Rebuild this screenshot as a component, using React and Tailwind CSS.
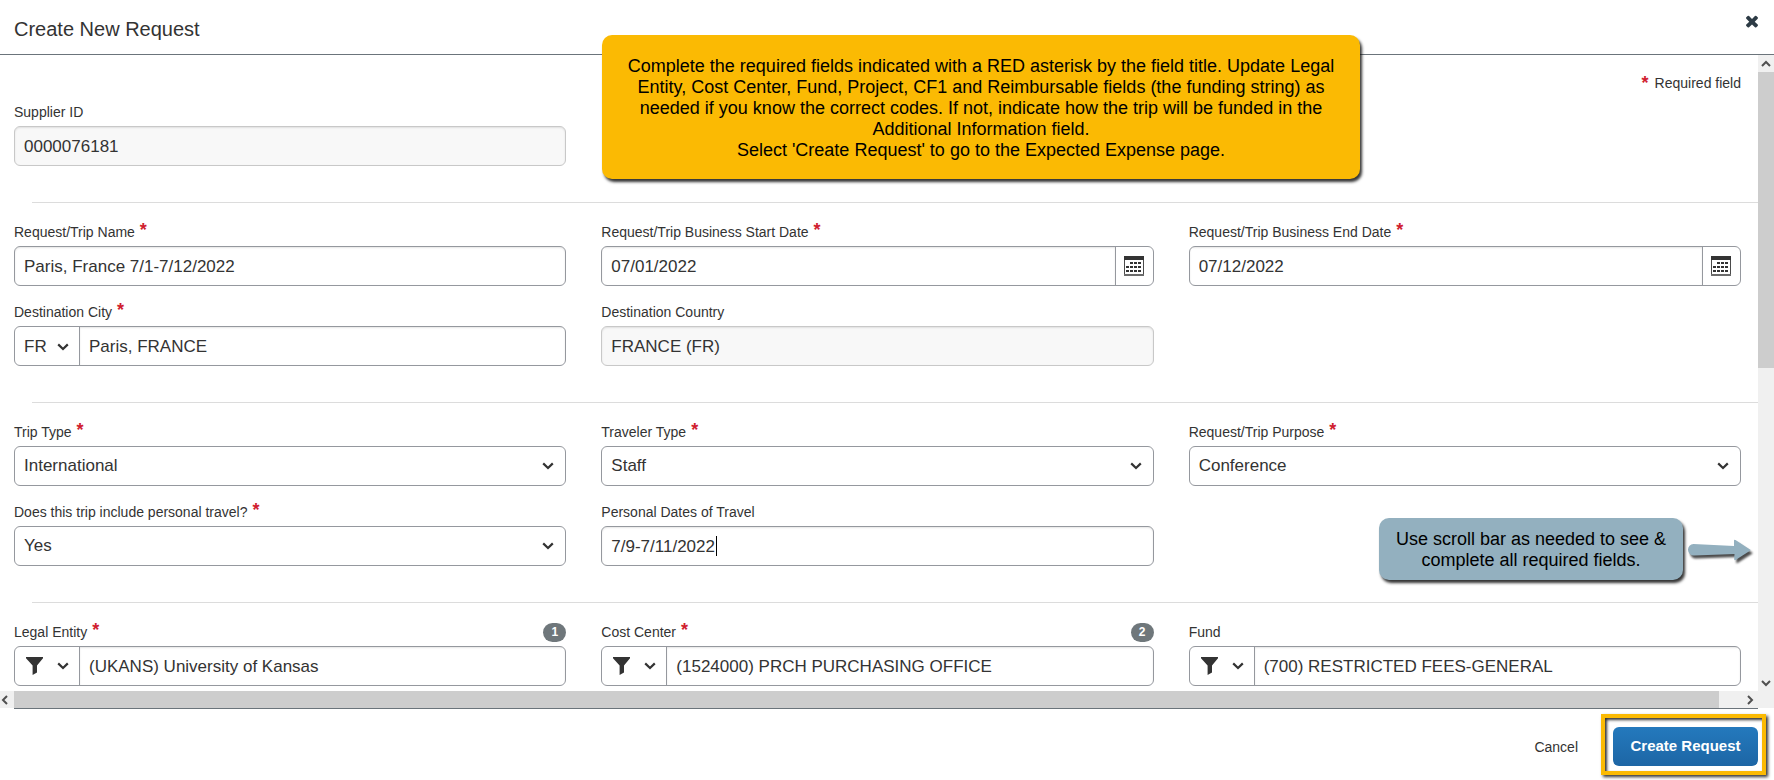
import { useState } from "react";
import clsx from "clsx";

const CONTROL = "h-10 w-full rounded-md border px-[9px] text-[17px] text-[#333]";
const GROUP = "flex h-10 w-full overflow-hidden rounded-md border border-[#95989e] bg-white text-[17px] text-[#333]";
const INSET = "pt-[2px] shadow-[inset_0_1px_2px_rgba(0,0,0,0.1)]";

function Chevron({ className }) {
    return (
        <svg viewBox="0 0 12 8" className={clsx("h-2 w-3 shrink-0", className)} fill="none" stroke="currentColor">
            <path d="M1.2 1.4 6 6 10.8 1.4" strokeWidth="2.2" />
        </svg>
    );
}

function CalendarIcon() {
    const dots = [
        [7, 7], [11, 7], [15, 7],
        [3, 11], [7, 11], [11, 11], [15, 11],
        [3, 15], [7, 15], [11, 15], [15, 15],
    ];
    return (
        <svg viewBox="0 0 20 20" className="size-5" shapeRendering="crispEdges">
            <rect width="20" height="20" fill="#4b4b4b" />
            <rect x="1" y="4" width="18" height="14" fill="#fff" />
            <rect width="20" height="4" fill="#333" />
            <rect y="18" width="20" height="2" fill="#6b6b6b" />
            {dots.map(([x, y]) => (
                <rect key={`${x}-${y}`} x={x - 1} y={y - 1} width="3" height="2" fill="#333" />
            ))}
        </svg>
    );
}

function FilterIcon() {
    return (
        <svg viewBox="0 0 17 18" className="h-[18px] w-[17px]" fill="#333">
            <path d="M0 0h17v1.2L11 8.4v7.2L6.6 18V8.4L0 1.2z" />
        </svg>
    );
}

function Field({ id, label, required, badge, children }) {
    return (
        <div>
            <div className="mb-1 flex h-5 items-center justify-between">
                <label htmlFor={id} className="flex gap-[5px] text-sm">
                    {label}
                    {required && <span className="text-lg leading-4 font-bold text-[#d0202e]">*</span>}
                </label>
                {badge && (
                    <span className="flex h-[19px] w-[23px] items-center justify-center rounded-full bg-[#6f777b] text-xs font-bold text-white">
                        {badge}
                    </span>
                )}
            </div>
            {children}
        </div>
    );
}

function TextField({ value, disabled, editing, ...field }) {
    const [text, setText] = useState(value);
    return (
        <Field {...field}>
            <div className="relative">
                <input
                    id={field.id}
                    value={text}
                    disabled={disabled}
                    onChange={(e) => setText(e.target.value)}
                    className={clsx(CONTROL, INSET, disabled ? "border-[#c8c8c8] bg-[#f8f8f8]" : "border-[#95989e] bg-white")}
                />
                {editing && <span className="pointer-events-none absolute top-[10px] left-[115px] h-5 w-px bg-black" />}
            </div>
        </Field>
    );
}

function DateField({ value, ...field }) {
    const [text, setText] = useState(value);
    return (
        <Field {...field}>
            <div className={GROUP}>
                <input
                    id={field.id}
                    value={text}
                    onChange={(e) => setText(e.target.value)}
                    className={clsx("min-w-0 flex-1 px-[9px]", INSET)}
                />
                <button aria-label="Open calendar" className="flex w-[38px] items-center justify-center border-l border-[#95989e]">
                    <CalendarIcon />
                </button>
            </div>
        </Field>
    );
}

function SelectField({ options, ...field }) {
    return (
        <Field {...field}>
            <div className="relative">
                <select id={field.id} className={clsx(CONTROL, "appearance-none border-[#95989e] bg-white")}>
                    {options.map((o) => (
                        <option key={o}>{o}</option>
                    ))}
                </select>
                <Chevron className="pointer-events-none absolute top-4 right-3" />
            </div>
        </Field>
    );
}

function LookupField({ value, prefix, ...field }) {
    const [text, setText] = useState(value);
    return (
        <Field {...field}>
            <div className={GROUP}>
                <button
                    aria-label={`${field.label} options`}
                    className={clsx(
                        "flex w-[65px] shrink-0 items-center justify-between border-r border-[#95989e] pr-[10px]",
                        prefix ? "pt-[2px] pl-[9px]" : "pl-[11px]"
                    )}
                >
                    {prefix || <FilterIcon />}
                    <Chevron />
                </button>
                <input
                    id={field.id}
                    value={text}
                    onChange={(e) => setText(e.target.value)}
                    className={clsx("min-w-0 flex-1 px-[9px]", INSET)}
                />
            </div>
        </Field>
    );
}

function Row({ children }) {
    return <div className="grid grid-cols-3 gap-x-[35px] gap-y-4 pr-[17px] pl-[14px]">{children}</div>;
}

function Divider() {
    return <hr className="mt-9 mb-[19px] ml-8 border-[#dcdcdc]" />;
}

function ScrollArrow({ d }) {
    return (
        <svg viewBox="0 0 10 10" className="size-[10px]" fill="none" stroke="#505050" strokeWidth="2">
            <path d={d} />
        </svg>
    );
}

export default function App() {
    return (
        <div className="relative flex min-h-screen flex-col bg-white font-['Liberation_Sans',Arial,sans-serif] text-[#333]">
            <header className="flex h-[55px] items-start justify-between border-b border-[#6b747b] pr-[13px] pl-[14px]">
                <h1 className="mt-4 text-xl leading-[26px]">Create New Request</h1>
                <button aria-label="Close" className="mt-3">
                    <svg viewBox="0 0 1792 1792" className="size-[18px]" fill="#2d3b45">
                        <path d="M1490 1322q0 40-28 68l-136 136q-28 28-68 28t-68-28l-294-294-294 294q-28 28-68 28t-68-28l-136-136q-28-28-28-68t28-68l294-294-294-294q-28-28-28-68t28-68l136-136q28-28 68-28t68 28l294 294 294-294q28-28 68-28t68 28l136 136q28 28 28 68t-28 68l-294 294 294 294q28 28 28 68z" />
                    </svg>
                </button>
            </header>

            <div className="flex">
                <div className="min-w-0 flex-1">
                    <main className="pt-[18px] pb-[5px]">
                        <p className="mb-[9px] flex justify-end gap-[6px] pr-[17px] text-sm leading-5">
                            <span className="text-lg leading-5 font-bold text-[#d0202e]">*</span>
                            Required field
                        </p>
                        <Row>
                            <TextField id="supplier" label="Supplier ID" value="0000076181" disabled />
                        </Row>
                        <Divider />
                        <Row>
                            <TextField id="name" label="Request/Trip Name" value="Paris, France 7/1-7/12/2022" required />
                            <DateField id="start" label="Request/Trip Business Start Date" value="07/01/2022" required />
                            <DateField id="end" label="Request/Trip Business End Date" value="07/12/2022" required />
                            <LookupField id="city" label="Destination City" value="Paris, FRANCE" prefix="FR" required />
                            <TextField id="country" label="Destination Country" value="FRANCE (FR)" disabled />
                        </Row>
                        <Divider />
                        <Row>
                            <SelectField id="trip-type" label="Trip Type" options={["International", "Domestic"]} required />
                            <SelectField id="traveler" label="Traveler Type" options={["Staff", "Student"]} required />
                            <SelectField id="purpose" label="Request/Trip Purpose" options={["Conference", "Research"]} required />
                            <SelectField id="personal" label="Does this trip include personal travel?" options={["Yes", "No"]} required />
                            <TextField id="personal-dates" label="Personal Dates of Travel" value="7/9-7/11/2022" editing />
                        </Row>
                        <Divider />
                        <Row>
                            <LookupField id="entity" label="Legal Entity" value="(UKANS) University of Kansas" badge="1" required />
                            <LookupField id="cost-center" label="Cost Center" value="(1524000) PRCH PURCHASING OFFICE" badge="2" required />
                            <LookupField id="fund" label="Fund" value="(700) RESTRICTED FEES-GENERAL" />
                        </Row>
                    </main>
                    <div className="flex h-[17px] bg-[#f0f0f0]">
                        <div className="flex w-[14px] items-center">
                            <ScrollArrow d="M7 1 3 5l4 4" />
                        </div>
                        <div className="flex-1 bg-[#cdcdcd]" />
                        <div className="flex w-[39px] items-center justify-end pr-[3px]">
                            <ScrollArrow d="M3 1l4 4-4 4" />
                        </div>
                    </div>
                </div>
                <div className="flex w-4 flex-col items-center bg-[#f0f0f0]">
                    <div className="flex h-[17px] items-center">
                        <ScrollArrow d="M1 7l4-4 4 4" />
                    </div>
                    <div className="h-[296px] w-full bg-[#cdcdcd]" />
                    <div className="mt-auto mb-5">
                        <ScrollArrow d="M1 3l4 4 4-4" />
                    </div>
                </div>
            </div>

            <footer className="mr-4 ml-[14px] flex items-start justify-end gap-[35px] border-t border-[#6b747b] pt-[18px]">
                <button className="h-[39px] text-sm">Cancel</button>
                <div className="relative">
                    <button className="h-[39px] w-[145px] rounded-md bg-linear-to-b from-[#2479bd] to-[#1d66a5] text-[15px] font-bold text-white">
                        Create Request
                    </button>
                    <div className="pointer-events-none absolute -top-[13px] -right-2 -bottom-[9px] -left-3 border-4 border-[#fbba03] shadow-[2px_2px_3px_rgba(0,0,0,0.8),inset_2px_2px_3px_rgba(0,0,0,0.8)]" />
                </div>
            </footer>

            <aside className="absolute top-[35px] left-[602px] flex h-36 w-[758px] items-center justify-center rounded-[10px] bg-[#fbba03] pt-[2px] text-center text-lg leading-[21px] text-black shadow-[2px_3px_3px_rgba(0,0,0,0.8)]">
                <p>
                    Complete the required fields indicated with a RED asterisk by the field title. Update Legal
                    <br />
                    Entity, Cost Center, Fund, Project, CF1 and Reimbursable fields (the funding string) as
                    <br />
                    needed if you know the correct codes. If not, indicate how the trip will be funded in the
                    <br />
                    Additional Information field.
                    <br />
                    Select 'Create Request' to go to the Expected Expense page.
                </p>
            </aside>

            <aside className="absolute top-[518px] right-[22px] flex items-center gap-[5px] text-lg leading-[21px] text-black">
                <p className="flex h-[62px] w-[304px] items-center justify-center rounded-[10px] bg-[#93b0bf] pt-[2px] text-center shadow-[2px_3px_3px_rgba(0,0,0,0.8)]">
                    Use scroll bar as needed to see &
                    <br />
                    complete all required fields.
                </p>
                <svg viewBox="0 0 64 24" className="h-6 w-16 drop-shadow-[2px_3px_1px_rgba(0,0,0,0.7)]" fill="#93b0bf">
                    <path d="M5.500 7 46 9V3.500q0-1 1.500-.500L62 12.500q1 .7 0 1.300L47.500 23q-1.500.5-1.300-1l.300-5L6 18.500a5.700 5.700 0 0 1-.5-11.500z" />
                </svg>
            </aside>
        </div>
    );
}
